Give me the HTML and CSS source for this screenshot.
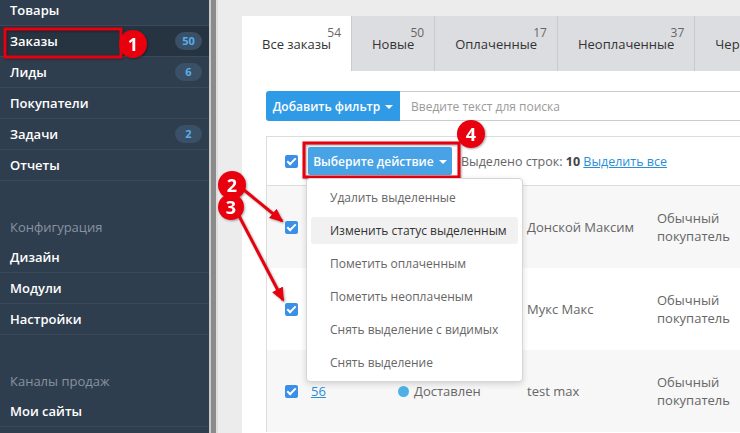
FILE: index.html
```html
<!DOCTYPE html>
<html lang="ru">
<head>
    <meta charset="UTF-8">
    <meta name="viewport" content="width=device-width, initial-scale=1.0">
    <title>Заказы</title>
    <link rel="stylesheet" href="styles.css">
</head>
<body>

<div class="layout">
    <aside class="sidebar">
        <ul class="nav first">
            <li><a href="#">Товары</a></li>
            <li class="current"><a href="#">Заказы</a><span class="badge">50</span></li>
            <li><a href="#">Лиды</a><span class="badge">6</span></li>
            <li><a href="#">Покупатели</a></li>
            <li><a href="#">Задачи</a><span class="badge">2</span></li>
            <li><a href="#">Отчеты</a></li>
        </ul>
        <div class="nav-title">Конфигурация</div>
        <ul class="nav">
            <li><a href="#">Дизайн</a></li>
            <li><a href="#">Модули</a></li>
            <li><a href="#">Настройки</a></li>
        </ul>
        <div class="nav-title">Каналы продаж</div>
        <ul class="nav">
            <li><a href="#">Мои сайты</a></li>
        </ul>
    </aside>
    <div class="splitter"></div>

    <main class="main">
        <div class="card">
            <div class="tabs">
                <div class="tab active"><span class="tab-label">Все заказы<span class="count">54</span></span></div>
                <div class="tab"><span class="tab-label">Новые<span class="count">50</span></span></div>
                <div class="tab"><span class="tab-label">Оплаченные<span class="count">17</span></span></div>
                <div class="tab"><span class="tab-label">Неоплаченные<span class="count">37</span></span></div>
                <div class="tab"><span class="tab-label">Черновики<span class="count">3</span></span></div>
            </div>

            <div class="card-body">
                <div class="filter">
                    <button class="btn-filter">Добавить фильтр <span class="caret"></span></button>
                    <input class="search" type="text" placeholder="Введите текст для поиска">
                </div>

                <div class="grid">
                    <div class="grid-head">
                        <span class="check"></span>
                        <button class="btn-action">Выберите действие <span class="caret"></span></button>
                        <span class="selected">Выделено строк: <b>10</b> <a href="#">Выделить все</a></span>

                        <ul class="dropdown">
                            <li>Удалить выделенные</li>
                            <li class="hover">Изменить статус выделенным</li>
                            <li>Пометить оплаченным</li>
                            <li>Пометить неоплаченым</li>
                            <li>Снять выделение с видимых</li>
                            <li>Снять выделение</li>
                        </ul>
                    </div>

                    <!-- номер и статус первых строк закрыты меню -->
                    <div class="row odd">
                        <span class="check"></span>
                        <span class="num"></span>
                        <span class="status"></span>
                        <span class="name">Донской Максим</span>
                        <span class="type">Обычный покупатель</span>
                    </div>
                    <div class="row">
                        <span class="check"></span>
                        <span class="num"></span>
                        <span class="status"></span>
                        <span class="name">Мукс Макс</span>
                        <span class="type">Обычный покупатель</span>
                    </div>
                    <div class="row odd">
                        <span class="check"></span>
                        <a class="num" href="#">56</a>
                        <span class="status"><i class="dot"></i>Доставлен</span>
                        <span class="name">test max</span>
                        <span class="type">Обычный покупатель</span>
                    </div>
                </div>
            </div>
        </div>
    </main>
</div>

<!-- пометки поверх скриншота -->
<svg class="marks" width="740" height="433" viewBox="0 0 740 433">
    <defs>
        <marker id="head" markerWidth="14" markerHeight="12" refX="12" refY="6" orient="auto" markerUnits="userSpaceOnUse">
            <path d="M0,0 L14,6 L0,12 z" fill="#e8000e"/>
        </marker>
    </defs>
    <rect x="5" y="29" width="116" height="28" fill="none" stroke="#e8000e" stroke-width="3"/>
    <rect x="304" y="143" width="155" height="34" fill="none" stroke="#e8000e" stroke-width="3"/>

    <line x1="244" y1="190" x2="282" y2="221" stroke="#e8000e" stroke-width="3" marker-end="url(#head)"/>
    <line x1="238" y1="214" x2="283" y2="300" stroke="#e8000e" stroke-width="3" marker-end="url(#head)"/>
    <line x1="466" y1="179" x2="461" y2="221" stroke="#e8000e" stroke-width="3" marker-end="url(#head)"/>

    <g class="num-mark">
        <circle cx="133" cy="44" r="14"/><text x="133" y="44">1</text>
        <circle cx="232" cy="185" r="14"/><text x="232" y="185">2</text>
        <circle cx="231" cy="207" r="13"/><text x="231" y="207">3</text>
        <circle cx="471" cy="134" r="14"/><text x="471" y="134">4</text>
        <circle cx="505" cy="218" r="14"/><text x="505" y="218">5</text>
    </g>
</svg>

</body>
</html>
```

FILE: styles.css
```css
* {
    box-sizing: border-box;
}
body {
    margin: 0;
    width: 740px;
    height: 433px;
    overflow: hidden;
    position: relative;
    font-family: "Open Sans", Arial, sans-serif;
    font-size: 13px;
    color: #333;
}
.layout {
    display: flex;
    height: 433px;
}

/* sidebar */
.sidebar {
    width: 209px;
    flex-shrink: 0;
    background: #2f3e4e;
    overflow: hidden;
}
.nav {
    list-style: none;
    margin: 0;
    padding: 0;
}
.nav.first {
    margin-top: -5px;
}
.nav li {
    display: flex;
    align-items: center;
    height: 31px;
    padding: 0 7px 0 10px;
    border-bottom: 1px solid #3a4959;
}
.nav li.current {
    background: #263341;
}
.nav a {
    color: #fff;
    font-weight: 600;
    text-decoration: none;
}
.badge {
    margin-left: auto;
    width: 27px;
    height: 18px;
    line-height: 18px;
    border-radius: 9px;
    background: #3a5066;
    color: #58adea;
    font-size: 11px;
    font-weight: 700;
    text-align: center;
}
.nav-title {
    margin-top: 31px;
    height: 30px;
    line-height: 30px;
    padding-left: 10px;
    color: #8892a0;
}
.splitter {
    width: 9px;
    flex-shrink: 0;
    background: #8b8b8b;
    border-left: 2px solid #c9c9c9;
    border-right: 2px solid #dedede;
}

/* main */
.main {
    flex: 1;
    background: #ececec;
    padding: 16px 0 0 24px;
    overflow: hidden;
}
.card {
    width: 640px;
    height: 500px;
    background: #fff;
}
.tabs {
    display: flex;
    height: 55px;
    background: #dcdde0;
}
.tab {
    display: flex;
    align-items: center;
    flex-shrink: 0;
    padding: 0 20px;
    white-space: nowrap;
    border-left: 1px solid #c9cacd;
}
.tab.active {
    background: #fff;
    border-left: none;
}
.tab-label {
    position: relative;
    line-height: 10px;
    color: #333;
}
.count {
    position: absolute;
    right: -10px;
    top: -11px;
    font-size: 12px;
    line-height: 10px;
    color: #666;
}
.card-body {
    padding: 20px 0 0 24px;
}
.caret {
    display: inline-block;
    width: 0;
    height: 0;
    margin-left: 2px;
    vertical-align: middle;
    border-top: 4px solid #fff;
    border-left: 4px solid transparent;
    border-right: 4px solid transparent;
}
.filter {
    display: flex;
    height: 30px;
}
.btn-filter {
    width: 134px;
    border: none;
    border-radius: 3px 0 0 3px;
    background: #2f9ae6;
    color: #fff;
    font-family: inherit;
    font-size: 12px;
    font-weight: 600;
    padding: 0;
}
.search {
    flex: 1;
    border: 1px solid #ccc;
    border-left: none;
    padding: 0 11px;
    font-family: inherit;
    font-size: 12px;
    outline: none;
}
.search::placeholder {
    color: #9a9a9a;
}

/* table */
.grid {
    margin-top: 15px;
    border-top: 1px solid #ddd;
    border-left: 1px solid #ddd;
}
.grid-head {
    position: relative;
    display: flex;
    align-items: center;
    height: 49px;
    padding-left: 18px;
    border-bottom: 1px solid #ddd;
}
.check {
    position: relative;
    flex-shrink: 0;
    width: 13px;
    height: 13px;
    border-radius: 2px;
    background: #3b8fe7;
}
.check::after {
    content: "";
    position: absolute;
    left: 4px;
    top: 1px;
    width: 3px;
    height: 7px;
    border: solid #fff;
    border-width: 0 2px 2px 0;
    transform: rotate(45deg);
}
.btn-action {
    margin-left: 10px;
    width: 144px;
    height: 28px;
    border: none;
    border-radius: 2px;
    background: #47a3e6;
    color: #fff;
    font-family: inherit;
    font-size: 12px;
    font-weight: 600;
    padding: 0;
}
.selected {
    margin-left: 9px;
    font-size: 12.5px;
    color: #666;
}
.selected b {
    color: #444;
}
.selected a {
    color: #2a8fd8;
}
.dropdown {
    position: absolute;
    left: 39px;
    top: 41px;
    z-index: 5;
    display: flex;
    flex-direction: column;
    gap: 6px;
    width: 217px;
    margin: 0;
    padding: 5px 4px;
    list-style: none;
    background: #fff;
    border: 1px solid #d6d6d6;
    border-radius: 4px;
    box-shadow: 0 2px 6px rgba(0, 0, 0, 0.15);
}
.dropdown li {
    height: 27px;
    line-height: 27px;
    padding-left: 19px;
    border-radius: 3px;
    font-size: 12px;
    color: #666;
    white-space: nowrap;
}
.dropdown li.hover {
    background: #f1f1f1;
    color: #333;
}
.row {
    display: flex;
    align-items: center;
    height: 82px;
    padding-left: 18px;
    color: #666;
}
.row.odd {
    background: #f7f7f7;
}
.num {
    width: 87px;
    margin-left: 13px;
    color: #2a8fd8;
}
.status {
    display: flex;
    align-items: center;
    width: 129px;
}
.dot {
    width: 11px;
    height: 11px;
    margin-right: 5px;
    border-radius: 50%;
    background: #4fb0e8;
}
.name {
    width: 130px;
}
.type {
    width: 80px;
    line-height: 18px;
}

/* annotations */
.marks {
    position: absolute;
    left: 0;
    top: 0;
    pointer-events: none;
    filter: drop-shadow(1px 1px 1px rgba(0, 0, 0, 0.35));
}
.num-mark circle {
    fill: #e8000e;
}
.num-mark text {
    fill: #fff;
    font-family: "Open Sans", Arial, sans-serif;
    font-size: 18px;
    font-weight: 700;
    text-anchor: middle;
    dominant-baseline: central;
}
```
